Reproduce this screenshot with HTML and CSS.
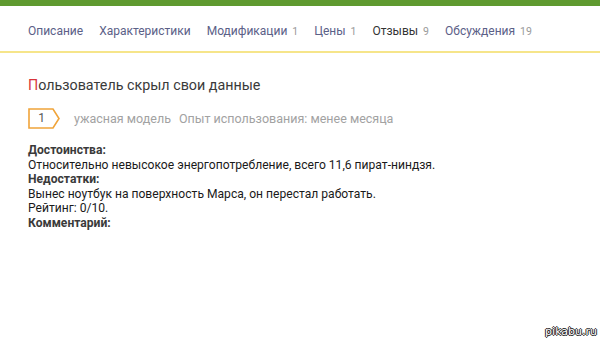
FILE: index.html
```html
<!DOCTYPE html>
<html lang="ru">
<head>
<meta charset="utf-8">
<link rel="stylesheet" href="styles.css">
</head>
<body>
<div class="topbar"></div>
<nav class="tabs">
  <span class="tab">Описание</span>
  <span class="tab">Характеристики</span>
  <span class="tab">Модификации <span class="cnt">1</span></span>
  <span class="tab">Цены <span class="cnt">1</span></span>
  <span class="tab active">Отзывы <span class="cnt">9</span></span>
  <span class="tab">Обсуждения <span class="cnt">19</span></span>
</nav>
<main class="review">
  <h1 class="author"><span class="first">П</span>ользователь скрыл свои данные</h1>
  <div class="meta">
    <span class="badge">
      <svg width="33" height="21" viewBox="0 0 33 21"><path d="M1 1 H25 L31 10.5 L25 20 H1 Z" fill="none" stroke="#f0a43a" stroke-width="1.6"/></svg>
      <span class="badge-num">1</span>
    </span>
    <span class="verdict">ужасная модель</span>
    <span class="exp">Опыт использования: менее месяца</span>
  </div>
  <div class="body">
    <div class="h">Достоинства:</div>
    <div>Относительно невысокое энергопотребление, всего 11,6 пират-ниндзя.</div>
    <div class="h">Недостатки:</div>
    <div>Вынес ноутбук на поверхность Марса, он перестал работать.</div>
    <div>Рейтинг: 0/10.</div>
    <div class="h">Комментарий:</div>
  </div>
</main>
<div class="wm">pikabu.ru</div>
</body>
</html>
```
FILE: styles.css
```css
html, body { margin: 0; padding: 0; }
body {
  width: 600px;
  height: 347px;
  background: #fff;
  font-family: Roboto, "Noto Sans", Arial, sans-serif;
  position: relative;
  overflow: hidden;
}
.topbar { height: 6px; background: #5f9a30; }
.tabs {
  display: flex;
  gap: 16px;
  padding: 15px 0 0 28px;
  height: 30px;
  border-bottom: 2px solid #f6e58a;
  box-sizing: content-box;
  font-size: 12px;
  color: #5b6087;
}
.tabs .tab { line-height: 20px; }
.tabs .cnt { color: #9a9a9a; font-size: 10.5px; margin-left: 2px; }
.tabs .active { color: #333; }
.review { padding: 22px 0 0 28px; }
.author {
  margin: 0;
  font-weight: 400;
  font-size: 14.3px;
  line-height: 20px;
  color: #3a3a3a;
}
.author .first { color: #d8343a; }
.meta {
  display: flex;
  align-items: center;
  margin-top: 13px;
  height: 21px;
  font-size: 12.5px;
  color: #a2a2a2;
}
.badge { position: relative; width: 33px; height: 21px; margin-right: 13px; }
.badge svg { display: block; }
.badge-num {
  position: absolute; left: 0; top: 0; width: 27px; line-height: 21px;
  text-align: center; color: #555; font-size: 12px;
}
.exp { margin-left: 8px; }
.body {
  margin-top: 14px;
  font-size: 12.1px;
  line-height: 14.5px;
  color: #1a1a1a;
}
.body .h { font-weight: 700; color: #3a3a3a; }
.wm {
  position: absolute;
  right: 3px;
  bottom: 9px;
  font-family: "DejaVu Sans", sans-serif;
  font-size: 11px;
  color: #fff;
  text-shadow: -1px 0 #222, 1px 0 #222, 0 -1px #222, 0 1px #222;
}
```
